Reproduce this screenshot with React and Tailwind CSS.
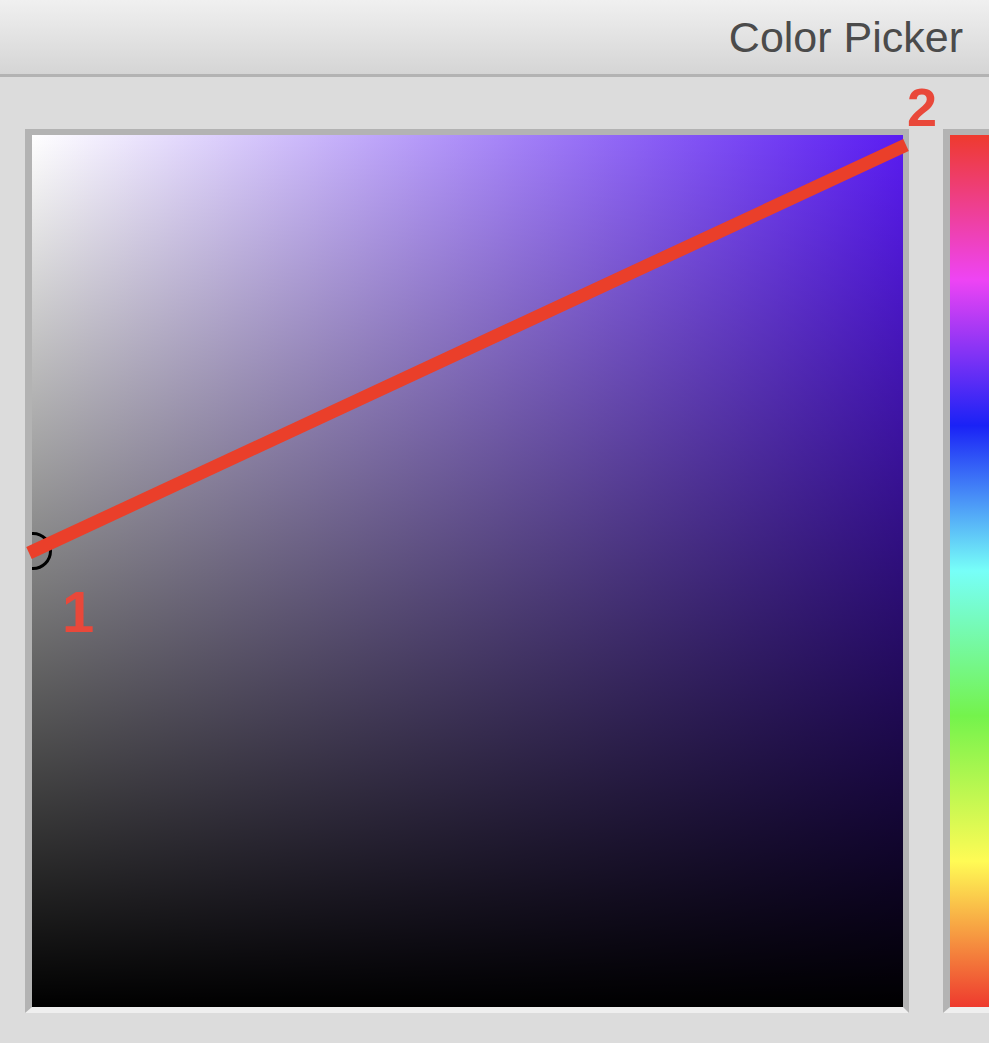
import React from 'react';

const hue = 'linear-gradient(to bottom, #ee3a2e 0%, #ee44f4 16.6%, #1a22f6 33.3%, #77fff8 50%, #74f34c 66.6%, #fffb55 83.3%, #ee3a2e 100%)';

export default function App() {
  return (
    <div className="relative w-full h-[1043px] overflow-hidden bg-[#dcdcdc] font-['Liberation_Sans',Arial,sans-serif]">
      {/* header */}
      <div className="h-[77px] border-b-[3px] border-[#b3b3b3] bg-[linear-gradient(to_bottom,#f0f0f0,#d5d5d5)] flex items-center justify-end pr-[26px]">
        <span className="text-[43px] leading-none text-[#4b4b4b]">Color Picker</span>
      </div>

      {/* body */}
      <div className="flex gap-[34px] pt-[52px] pl-[25px]">
        {/* saturation / value square */}
        <div className="shrink-0 w-[884px] h-[884px] border-t-[6px] border-l-[7px] border-r-[6px] border-b-[6px] border-t-[#b3b3b3] border-l-[#b3b3b3] border-r-[#b3b3b3] border-b-[#efefef]">
          <div className="relative w-full h-full overflow-hidden bg-[linear-gradient(to_right,#ffffff,#5a1cf2)]">
            <div className="absolute inset-0 bg-[linear-gradient(to_bottom,rgba(0,0,0,0),#000000)]" />
            <div className="absolute left-[-18px] top-[397px] w-[38px] h-[38px] rounded-full border-[3px] border-black" />
          </div>
        </div>

        {/* hue strip */}
        <div className="shrink-0 w-[60px] h-[884px] border-t-[6px] border-l-[7px] border-b-[6px] border-t-[#b3b3b3] border-l-[#b3b3b3] border-b-[#efefef]">
          <div className="w-full h-full" style={{ background: hue }} />
        </div>
      </div>

      {/* annotation overlay */}
      <svg className="absolute inset-0 pointer-events-none" width="989" height="1043">
        <line x1="29" y1="553" x2="906" y2="145" stroke="#ea3f2a" strokeWidth="13" />
        <text x="62" y="632" fontFamily="Liberation Sans, Arial, sans-serif" fontWeight="700" fontSize="58" fill="#e9483a">1</text>
        <text x="907" y="126" fontFamily="Liberation Sans, Arial, sans-serif" fontWeight="700" fontSize="54" fill="#e9483a">2</text>
      </svg>
    </div>
  );
}
